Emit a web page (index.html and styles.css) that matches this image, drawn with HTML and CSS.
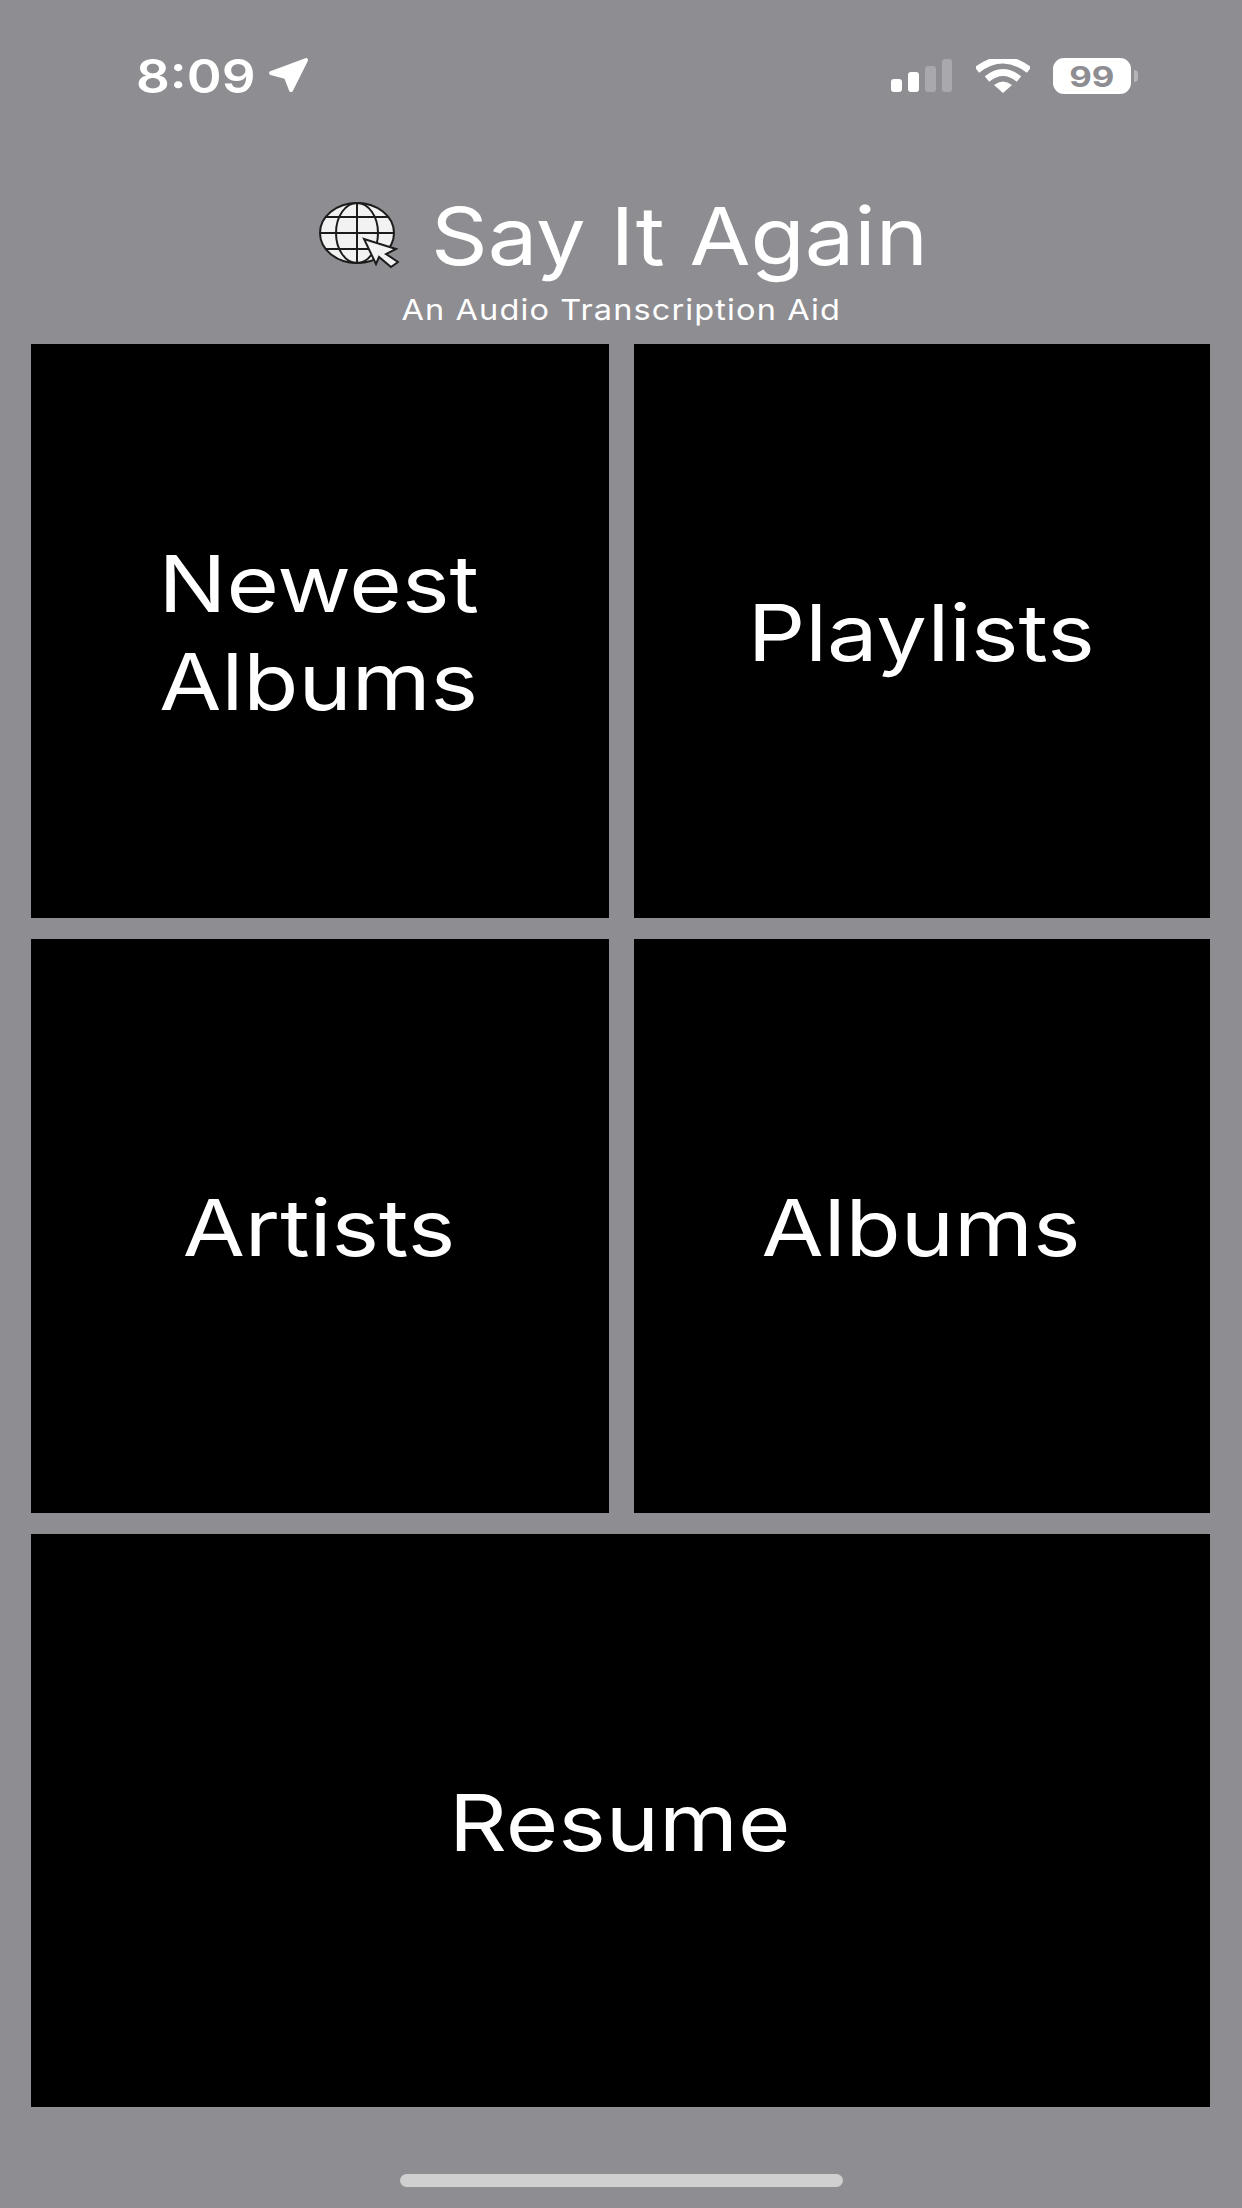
FILE: index.html
```html
<!DOCTYPE html>
<html lang="en">
<head>
    <meta charset="UTF-8">
    <title>Say It Again</title>
    <link rel="stylesheet" href="styles.css">
</head>
<body>
    <div class="status-bar">
        <div class="status-left">
            <span class="clock">8:09</span>
            <svg class="arrow" width="42" height="36" viewBox="0 0 42 36">
                <path d="M3 16 38 3 23 33 18 20Z" fill="#fff" stroke="#fff" stroke-width="4" stroke-linejoin="round"/>
            </svg>
        </div>
        <div class="status-right">
            <svg class="signal" width="62" height="34" viewBox="0 0 62 34">
                <rect x="1" y="20" width="11" height="13" rx="3" fill="#fff"/>
                <rect x="18" y="13" width="11" height="20" rx="3" fill="#fff"/>
                <rect x="35" y="7" width="11" height="26" rx="3" fill="#a9a9ad"/>
                <rect x="52" y="0" width="10" height="33" rx="3" fill="#a9a9ad"/>
            </svg>
            <svg class="wifi" width="54" height="34" viewBox="0 0 54 34">
                <path d="M1 11Q27-9 53 11" fill="none" stroke="#fff" stroke-width="7"/>
                <path d="M11 20Q27 7 43 20" fill="none" stroke="#fff" stroke-width="7"/>
                <path d="M18 26Q27 19 36 26L27 34Z" fill="#fff"/>
            </svg>
            <div class="battery">
                <span class="battery-level">99</span>
            </div>
            <div class="battery-cap"></div>
        </div>
    </div>

    <header class="title-area">
        <div class="title-row">
            <svg class="globe" width="80" height="68" viewBox="0 0 80 68">
                <ellipse cx="38" cy="32" rx="37" ry="30" fill="#f2f2f2" stroke="#1c1c1c" stroke-width="2"/>
                <ellipse cx="38" cy="32" rx="21" ry="30" fill="none" stroke="#1c1c1c" stroke-width="2"/>
                <path d="M38 2V62M1 32H75M7 16H69M7 48H69" fill="none" stroke="#1c1c1c" stroke-width="2"/>
                <path d="M45 38 77 48 67 53 79 61 72 66 60 56 57 63Z" fill="#f2f2f2" stroke="#1c1c1c" stroke-width="2"/>
            </svg>
            <h1 class="app-title">Say It Again</h1>
        </div>
        <p class="app-subtitle">An Audio Transcription Aid</p>
    </header>

    <main class="menu-grid">
        <div class="tile"><span class="tile-label">Newest<br>Albums</span></div>
        <div class="tile"><span class="tile-label">Playlists</span></div>
        <div class="tile"><span class="tile-label">Artists</span></div>
        <div class="tile"><span class="tile-label">Albums</span></div>
        <div class="tile tile-wide"><span class="tile-label">Resume</span></div>
    </main>

    <div class="home-bar"></div>
</body>
</html>
```
FILE: styles.css
```css
html, body {
    margin: 0;
    padding: 0;
}
body {
    width: 1242px;
    height: 2208px;
    overflow: hidden;
    background-color: #8e8d92;
    color: #fff;
    font-family: Inter, Roboto, sans-serif;
    display: flex;
    flex-direction: column;
    align-items: center;
}
.status-bar {
    box-sizing: border-box;
    width: 100%;
    height: 130px;
    flex-shrink: 0;
    padding: 56px 104px 0 136px;
    display: flex;
    justify-content: space-between;
    align-items: flex-start;
}
.status-left {
    display: flex;
    align-items: center;
}
.clock {
    font-weight: 600;
    font-size: 46px;
    line-height: 40px;
    width: 132px;
    transform: scaleX(1.15);
    transform-origin: left center;
}
.arrow {
    margin-top: -2px;
}
.status-right {
    display: flex;
    align-items: center;
    padding-top: 2px;
}
.signal {
    margin-right: 24px;
}
.wifi {
    margin-right: 23px;
}
.battery {
    width: 78px;
    height: 36px;
    border-radius: 11px;
    background-color: #fff;
    display: flex;
    align-items: center;
    justify-content: center;
}
.battery-level {
    font-weight: 700;
    font-size: 29px;
    color: #8e8d92;
    transform: scaleX(1.2);
}
.battery-cap {
    width: 4px;
    height: 12px;
    margin-left: 3px;
    background-color: #b5b5b8;
    border-radius: 0 6px 6px 0;
}
.title-area {
    box-sizing: border-box;
    height: 214px;
    flex-shrink: 0;
    padding-top: 53px;
    display: flex;
    flex-direction: column;
    align-items: center;
}
.title-row {
    display: flex;
    align-items: center;
    height: 104px;
}
.globe {
    margin-right: 32px;
    margin-left: 1px;
    margin-top: 0;
}
.app-title {
    width: 494px;
    margin: 0;
    font-weight: 400;
    font-size: 80px;
    white-space: nowrap;
    transform: scaleX(1.105);
    transform-origin: left center;
}
.app-subtitle {
    margin: 5px 0 0;
    font-size: 29px;
    line-height: 36px;
    letter-spacing: 1px;
    transform: scaleX(1.12);
}
.menu-grid {
    box-sizing: border-box;
    width: 100%;
    flex-shrink: 0;
    padding: 0 32px 0 31px;
    display: grid;
    grid-template-columns: 578px 576px;
    grid-template-rows: 574px 574px 573px;
    column-gap: 25px;
    row-gap: 21px;
}
.tile {
    box-sizing: border-box;
    padding-top: 4px;
    padding-right: 2px;
    background-color: #000;
    display: flex;
    align-items: center;
    justify-content: center;
    text-align: center;
    font-size: 78px;
    line-height: 98px;
}
.tile-label {
    display: inline-block;
    transform: scaleX(1.155);
}
.tile-wide {
    grid-column: 1 / 3;
}
.home-bar {
    width: 443px;
    height: 13px;
    flex-shrink: 0;
    margin-top: 67px;
    border-radius: 7px;
    background-color: #d0d0d0;
}
```
